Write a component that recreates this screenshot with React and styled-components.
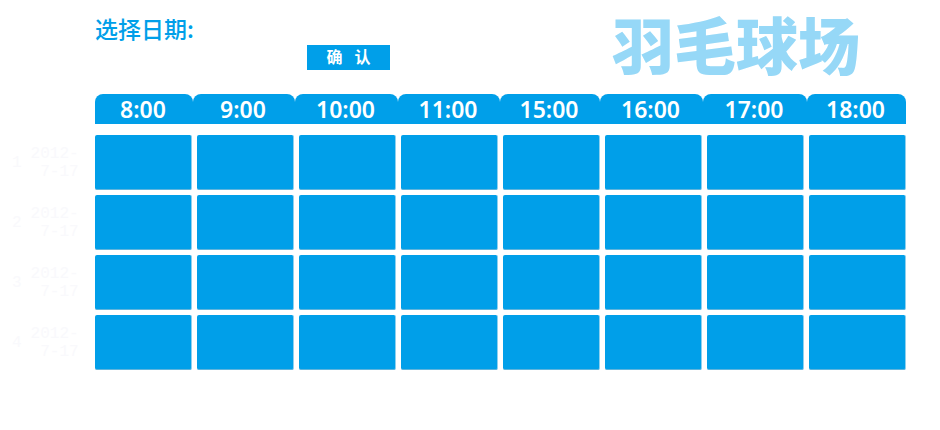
import React from 'react';
import styled, { createGlobalStyle } from 'styled-components';

const blue = '#009fe9';

const Global = createGlobalStyle`
  * { box-sizing: border-box; }
  body {
    margin: 0;
    background: #fff;
    font-family: "Noto Sans CJK SC", sans-serif;
  }
`;

const Page = styled.main`
  padding: 12px 34px 60px 12px;
`;

const Header = styled.header`
  display: flex;
  align-items: flex-start;
  justify-content: space-between;
  height: 82px;
  padding: 0 46px 0 83px;
`;

const Form = styled.form`
  display: flex;
`;

const DateLabel = styled.h2`
  width: 212px;
  margin: 0;
  color: ${blue};
  font-size: 23px;
  font-weight: 500;
  line-height: 32px;
`;

const Confirm = styled.button`
  display: flex;
  align-self: flex-start;
  justify-content: center;
  gap: 12px;
  width: 83px;
  height: 25px;
  margin-top: 33px;
  padding: 0;
  border: 0;
  background: ${blue};
  color: #fff;
  font-family: inherit;
  font-size: 16px;
  font-weight: 700;
  line-height: 22px;
  cursor: pointer;
`;

const Title = styled.h1`
  margin: 0;
  color: #96d8f7;
  font-size: 62px;
  font-weight: 900;
  line-height: 62px;
  white-space: nowrap;
`;

const Schedule = styled.table`
  display: block;
`;

const Head = styled.thead`
  display: block;
  margin-bottom: 11px;
  padding-left: 83px;
`;

const TimeRow = styled.tr`
  display: grid;
  grid-template-columns: 98fr 102fr 103fr 102fr 100fr 103fr 104fr 99fr;
`;

const Time = styled.th`
  height: 30px;
  padding: 0 2px 0 0;
  border-radius: 8px 8px 0 0;
  background: ${blue};
  color: #fff;
  font-family: "Noto Sans", sans-serif;
  font-size: 23px;
  font-weight: 600;
  line-height: 30px;
  text-align: center;
`;

const Courts = styled.tbody`
  display: grid;
  gap: 5px;
`;

const CourtRow = styled.tr`
  display: grid;
  grid-template-columns: 78px repeat(8, 1fr);
  gap: 5px;
`;

const Court = styled.th`
  display: flex;
  align-items: center;
  gap: 7px;
  padding: 0;
  color: #f9f9fc;
  font-family: "Liberation Mono", monospace;
  font-size: 16px;
  font-weight: 400;
  line-height: 18px;
`;

const CourtDate = styled.span`
  width: 50px;
  text-align: right;
`;

const SlotCell = styled.td`
  padding: 0;
`;

const Slot = styled.button`
  display: block;
  width: 100%;
  height: 55px;
  padding: 0;
  border: 0;
  border-right: 1px solid #8fd0ee;
  border-bottom: 1px solid #5fb4dc;
  border-radius: 2px;
  background: ${blue};
  cursor: pointer;
`;

const times = ['8:00', '9:00', '10:00', '11:00', '15:00', '16:00', '17:00', '18:00'];
const courts = [1, 2, 3, 4];

export default function App() {
  return (
    <>
      <Global />
      <Page>
        <Header>
          <Form onSubmit={(e) => e.preventDefault()}>
            <DateLabel>选择日期:</DateLabel>
            <Confirm type="submit" aria-label="确认">
              <span>确</span>
              <span>认</span>
            </Confirm>
          </Form>
          <Title>羽毛球场</Title>
        </Header>
        <Schedule>
          <Head>
            <TimeRow>
              {times.map((time) => (
                <Time key={time} scope="col">{time}</Time>
              ))}
            </TimeRow>
          </Head>
          <Courts>
            {courts.map((court) => (
              <CourtRow key={court}>
                <Court scope="row">
                  <span>{court}</span>
                  <CourtDate>2012-<br />7-17</CourtDate>
                </Court>
                {times.map((time) => (
                  <SlotCell key={time}>
                    <Slot type="button" aria-label={`${court} ${time}`} />
                  </SlotCell>
                ))}
              </CourtRow>
            ))}
          </Courts>
        </Schedule>
      </Page>
    </>
  );
}
